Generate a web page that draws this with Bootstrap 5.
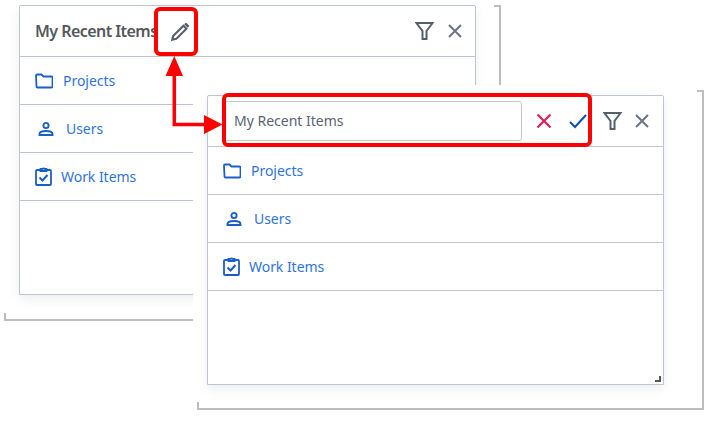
<!DOCTYPE html>
<html lang="en">
  <head>
    <meta charset="UTF-8" />
    <title>My Recent Items</title>
    <link href="https://cdn.jsdelivr.net/npm/bootstrap@5.3.3/dist/css/bootstrap.min.css" rel="stylesheet" />
    <style>
      body { background: #fff; font-family: "Noto Sans", sans-serif; overflow: hidden; }
      .shot-canvas { position: relative; width: 715px; height: 421px; }
      .shot-bracket { position: absolute; border: 0 solid #bdbdbd; }
      .bracket-back { left: 4px; top: 5px; width: 497px; height: 316px; border-width: 0 2px 2px 0; }
      .bracket-back::before, .bracket-back::after, .bracket-front::before, .bracket-front::after { content: ""; position: absolute; background: #bdbdbd; }
      .bracket-back::before, .bracket-front::before { right: 0; top: 0; width: 5px; height: 2px; }
      .bracket-back::after, .bracket-front::after { left: 0; bottom: 0; width: 2px; height: 6px; }
      .bracket-front { left: 4px; top: 5px; width: 507px; height: 320px; border-width: 0 2px 2px 0; }
      .front-layer { position: absolute; left: 193px; top: 85px; width: 522px; height: 336px; background: #fff; }
      .item-win { position: absolute; width: 457px; height: 290px; border: 1px solid #bcc5d3; border-radius: 2px 2px 0 0; background: #fff; box-shadow: 0 4px 12px rgba(0,0,0,.07); overflow: hidden; }
      .win-back { left: 19px; top: 5px; }
      .win-front { left: 14px; top: 10px; }
      .win-head { height: 51px; border-bottom: 1px solid #bcc5d3; padding: 0 12px 0 15px; }
      .win-front .win-head { padding-right: 13px; }
      .win-title { font-size: 16px; font-weight: 600; color: #54575c; letter-spacing: -.55px; }
      .rename-input { width: 299px; height: 40px; border: 1px solid #c5c8cc; border-radius: 3px; font-size: 14px; color: #5a6472; padding: 0 10px 2px; background: #fff; }
      .gap-check { margin-left: 17px; }
      .gap-filter { margin-left: 16px; }
      .gap-close { margin-left: 12px; }
      .win-front .gap-close { margin-left: 11px; }
      .item-row { height: 48px; border-bottom: 1px solid #bcc5d3; font-size: 14px; color: #2f74da; text-decoration: none; letter-spacing: -.04px; }
      .row-projects { padding-left: 15px; gap: 10px; }
      .row-users { padding-left: 18px; gap: 12px; }
      .row-work { padding-left: 15px; gap: 9px; }
      .red-box { position: absolute; border: 4px solid #f00; border-radius: 6px; }
      .box-pencil { left: 154px; top: 7px; width: 44px; height: 49px; padding-left: 8px; }
      .box-input { left: 222px; top: 93px; width: 370px; height: 54px; }
      .arrow-art { position: absolute; left: 160px; top: 50px; }
      .grip-mark { position: absolute; right: 2px; bottom: 2px; }
    </style>
    <script src="https://cdn.jsdelivr.net/npm/bootstrap@5.3.3/dist/js/bootstrap.bundle.min.js"></script>
  </head>
  <body>
    <div class="shot-canvas">
      <div class="shot-bracket bracket-back"></div>

      <!-- Panel de atrás -->
      <div class="item-win win-back">
        <div class="win-head d-flex align-items-center">
          <span class="win-title">My Recent Items</span>
          <svg class="ms-auto" width="20" height="20" viewBox="0 0 20 20" fill="none" stroke="#555f6b" stroke-width="2"><path d="M1.500 2 h16 l-6 8 v8 h-4 v-8 z"/></svg>
          <svg class="gap-close" width="16" height="16" viewBox="0 0 16 16" stroke="#6b7480" stroke-width="2"><path d="M2 2 L14 14 M14 2 L2 14"/></svg>
        </div>
        <a class="item-row row-projects d-flex align-items-center" href="#">
          <svg width="18" height="16" viewBox="0 0 18 16" fill="none" stroke="#1a5fc8" stroke-width="1.800"><path d="M1 2.500 q0-1 1-1 h4.500 l2 2 h7.500 q1.500 0 1.500 1 v9 q0 1-1 1 h-14 q-1 0-1-1 z"/></svg>
          <span>Projects</span>
        </a>
        <a class="item-row row-users d-flex align-items-center" href="#">
          <svg width="16" height="16" viewBox="0 0 16 16" fill="none" stroke="#1a5fc8" stroke-width="1.900"><circle cx="8" cy="4.500" r="2.600"/><path d="M1.500 14 v-1 q0-3 6.500-3 t6.500 3 v1 z"/></svg>
          <span>Users</span>
        </a>
        <a class="item-row row-work d-flex align-items-center" href="#">
          <svg width="17" height="19" viewBox="0 0 17 19" fill="none" stroke="#1a5fc8" stroke-width="1.800"><path d="M5 3 h-3 q-1 0-1 1 v13 q0 1 1 1 h13 q1 0 1-1 v-13 q0-1-1-1 h-3"/><path d="M5.500 4 v-2 h1.500 q1.500-1 3 0 h1.500 v2 z" fill="#fff"/><path d="M4.500 10.500 l3 3 l5-5.500" stroke-width="2"/></svg>
          <span>Work Items</span>
        </a>
      </div>

      <!-- Panel de adelante -->
      <div class="front-layer">
        <div class="shot-bracket bracket-front"></div>
        <div class="item-win win-front">
          <div class="win-head d-flex align-items-center">
            <input class="rename-input" type="text" value="My Recent Items" />
            <svg class="ms-auto" width="16" height="16" viewBox="0 0 16 16" stroke="#e8174f" stroke-width="2"><path d="M1.500 1.500 L14.500 14.500 M14.500 1.500 L1.500 14.500"/></svg>
            <svg class="gap-check" width="18" height="16" viewBox="0 0 18 16" fill="none" stroke="#0d50b0" stroke-width="2"><path d="M1 9 L6 14 L17 2"/></svg>
            <svg class="gap-filter" width="20" height="20" viewBox="0 0 20 20" fill="none" stroke="#555f6b" stroke-width="2"><path d="M1.500 2 h16 l-6 8 v8 h-4 v-8 z"/></svg>
            <svg class="gap-close" width="16" height="16" viewBox="0 0 16 16" stroke="#6b7480" stroke-width="2"><path d="M2 2 L14 14 M14 2 L2 14"/></svg>
          </div>
          <a class="item-row row-projects d-flex align-items-center" href="#">
            <svg width="18" height="16" viewBox="0 0 18 16" fill="none" stroke="#1a5fc8" stroke-width="1.800"><path d="M1 2.500 q0-1 1-1 h4.500 l2 2 h7.500 q1.500 0 1.500 1 v9 q0 1-1 1 h-14 q-1 0-1-1 z"/></svg>
            <span>Projects</span>
          </a>
          <a class="item-row row-users d-flex align-items-center" href="#">
            <svg width="16" height="16" viewBox="0 0 16 16" fill="none" stroke="#1a5fc8" stroke-width="1.900"><circle cx="8" cy="4.500" r="2.600"/><path d="M1.500 14 v-1 q0-3 6.500-3 t6.500 3 v1 z"/></svg>
            <span>Users</span>
          </a>
          <a class="item-row row-work d-flex align-items-center" href="#">
            <svg width="17" height="19" viewBox="0 0 17 19" fill="none" stroke="#1a5fc8" stroke-width="1.800"><path d="M5 3 h-3 q-1 0-1 1 v13 q0 1 1 1 h13 q1 0 1-1 v-13 q0-1-1-1 h-3"/><path d="M5.500 4 v-2 h1.500 q1.500-1 3 0 h1.500 v2 z" fill="#fff"/><path d="M4.500 10.500 l3 3 l5-5.500" stroke-width="2"/></svg>
            <span>Work Items</span>
          </a>
          <svg class="grip-mark" width="6" height="6" viewBox="0 0 6 6" fill="#555"><path d="M4 0 h2 v6 h-6 v-2 h4 z"/></svg>
        </div>
      </div>

      <!-- Anotaciones rojas -->
      <div class="red-box box-pencil d-flex align-items-center justify-content-center">
        <svg width="19" height="19" viewBox="0 0 18 18" fill="none" stroke="#555f6b" stroke-width="2"><path d="M11.800 3.600 L14.600 6.400 L5 16 L1.200 16.800 L2 13.200 Z"/><path d="M14.200 .5 L17.500 3.800 L15.800 5.500 L12.500 2.200 Z" fill="#555f6b" stroke="none"/></svg>
      </div>
      <div class="red-box box-input"></div>
      <svg class="arrow-art" width="66" height="90" viewBox="0 0 66 90"><path d="M14.300 24 V74.500 H46" fill="none" stroke="#f00" stroke-width="3.500"/><path d="M14.300 6 L23 26 H5.500 Z M62.500 74.500 L44 65 V84 Z" fill="#f00"/></svg>
    </div>
  </body>
</html>
